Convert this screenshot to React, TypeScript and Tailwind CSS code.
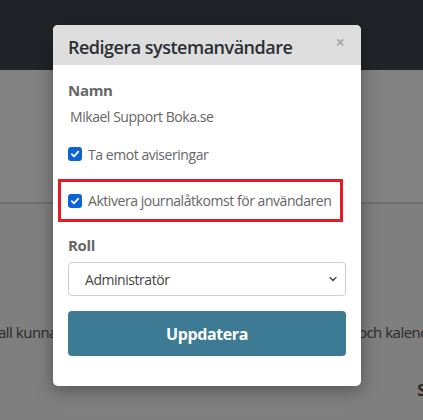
import React from 'react';

function Check() {
    return (
        <span className="w-[14px] h-[14px] rounded-[3px] bg-[#0b63d8] flex items-center justify-center shrink-0">
            <svg width="10" height="10" viewBox="0 0 10 10" fill="none">
                <path d="M1.8 5.2 L4 7.3 L8.3 2.6" stroke="#fff" strokeWidth="1.8" strokeLinecap="round" strokeLinejoin="round" />
            </svg>
        </span>
    );
}

export default function App() {
    return (
        <div className="relative w-[423px] h-[420px] overflow-hidden bg-[#7f7f7f] font-['Open_Sans',sans-serif]">
            {/* page behind the overlay */}
            <div className="h-[70px] bg-[#202428]" />
            <div className="h-[134px] bg-[#828282] border-b-2 border-[#6f6f6f]" />
            <div className="flex justify-between items-center pt-[117px] text-[15px] text-[#2a2a2a] tracking-[-0.5px] whitespace-nowrap">
                <span className="-ml-[2px]">all kunna</span>
                <span className="-mr-[6px]">och kalend</span>
            </div>
            <div className="flex justify-end pt-[34px] text-[16px] font-bold text-[#2a2a2a] -mr-[3px]">S</div>

            {/* modal */}
            <div className="absolute left-[53px] top-[25px] w-[308px] h-[361px] bg-white rounded-[5px] overflow-hidden shadow-[0_4px_18px_rgba(0,0,0,0.35)]">
                <div className="h-[40px] bg-[#dedede] flex items-center justify-between pl-[15px] pr-[16px]">
                    <span className="text-[18px] font-semibold text-[#2b2f33] tracking-[-0.5px] pt-[5px] whitespace-nowrap">Redigera systemanvändare</span>
                    <span className="text-[16px] font-bold text-[#a9a9a9] -mt-[6px]">×</span>
                </div>
                <div className="px-[15px] pt-[14px] flex flex-col">
                    <div className="text-[15px] font-bold text-[#666] leading-[22px] tracking-[-0.3px]">Namn</div>
                    <div className="mt-[5px] pl-[2px] text-[14px] text-[#666] leading-[22px] tracking-[-0.45px] whitespace-nowrap">Mikael Support Boka.se</div>
                    <div className="mt-[15px] flex items-center gap-[6px] h-[22px]">
                        <Check />
                        <span className="text-[14px] text-[#666] tracking-[-0.45px] whitespace-nowrap">Ta emot aviseringar</span>
                    </div>
                    <div className="mt-[14px] -mx-[10px] border-[3px] border-[#e31b23] w-[285px] h-[43px] flex items-center gap-[6px] pl-[7px]">
                        <Check />
                        <span className="text-[14px] text-[#666] tracking-[-0.45px] whitespace-nowrap">Aktivera journalåtkomst för användaren</span>
                    </div>
                    <div className="mt-[12px] text-[15px] font-bold text-[#666] leading-[22px] tracking-[-0.3px]">Roll</div>
                    <div className="mt-[6px] h-[34px] border border-[#ccc] rounded-[4px] flex items-center justify-between pl-[16px] pr-[7px]">
                        <span className="text-[14px] text-[#444] tracking-[-0.45px]">Administratör</span>
                        <svg width="10" height="10" viewBox="0 0 10 10" fill="none">
                            <path d="M2 3.5 L5 6.5 L8 3.5" stroke="#444" strokeWidth="1.4" strokeLinecap="round" strokeLinejoin="round" />
                        </svg>
                    </div>
                    <div className="mt-[15px] h-[45px] bg-[#3d7a94] rounded-[4px] flex items-center justify-center">
                        <span className="text-[16px] font-bold text-white tracking-[-0.4px]">Uppdatera</span>
                    </div>
                </div>
            </div>
        </div>
    );
}
